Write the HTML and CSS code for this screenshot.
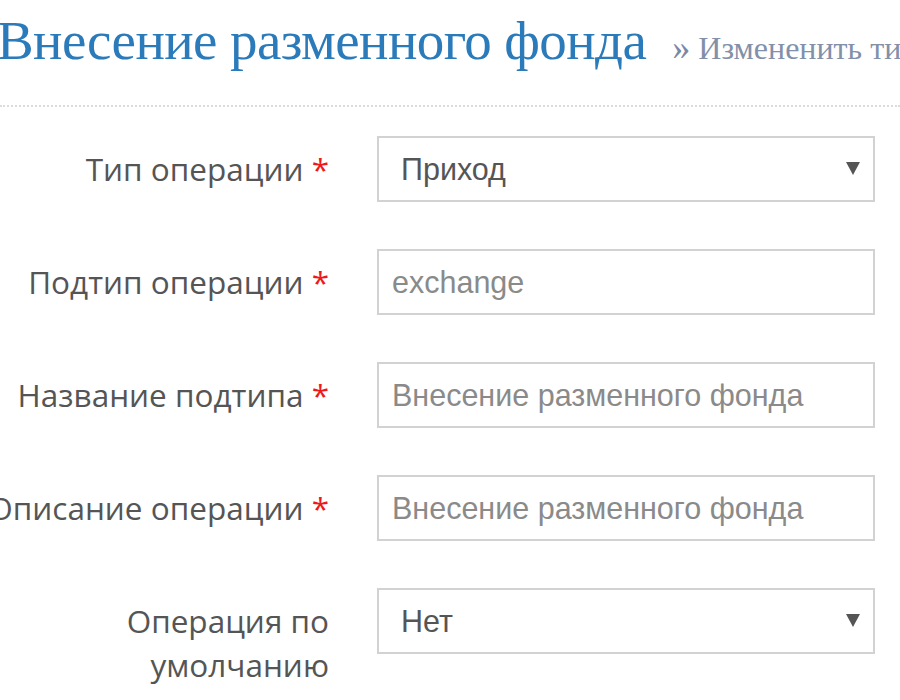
FILE: index.html
```html
<!DOCTYPE html>
<html lang="ru">
<head>
<meta charset="utf-8">
<link rel="stylesheet" href="styles.css">
</head>
<body>
<div class="page">
  <div class="header">
    <h1 class="title">Внесение разменного фонда</h1>
    <a class="change-link" href="#"><span class="raquo">»</span> Измененить тип операции</a>
  </div>
  <div class="divider"></div>
  <form class="form">
    <label class="label">Тип операции <span class="req">*</span></label>
    <div class="select"><span class="select-value">Приход</span><span class="arrow"></span></div>

    <label class="label">Подтип операции <span class="req">*</span></label>
    <input class="input" type="text" placeholder="exchange">

    <label class="label">Название подтипа <span class="req">*</span></label>
    <input class="input" type="text" placeholder="Внесение разменного фонда">

    <label class="label">Описание операции <span class="req">*</span></label>
    <input class="input" type="text" placeholder="Внесение разменного фонда">

    <label class="label label-wrap">Операция по умолчанию</label>
    <div class="select"><span class="select-value">Нет</span><span class="arrow"></span></div>
  </form>
</div>
</body>
</html>
```

FILE: styles.css
```css
html, body {
  margin: 0;
  padding: 0;
  background: #fff;
  overflow: hidden;
}
.page {
  width: 900px;
  height: 700px;
  overflow: hidden;
}
.header {
  display: flex;
  align-items: baseline;
  white-space: nowrap;
  margin-left: -3px;
  height: 80px;
  padding-top: 4px;
}
.title {
  margin: 0;
  font-family: "Liberation Serif", "Times New Roman", serif;
  font-weight: normal;
  font-size: 55px;
  letter-spacing: -0.6px;
  color: #2b7bba;
  line-height: 74px;
}
.change-link {
  margin-left: 26px;
  font-family: "Liberation Serif", "Times New Roman", serif;
  font-size: 32px;
  color: #8290aa;
  text-decoration: none;
}
.raquo {
  font-size: 36px;
  color: #7a88a6;
}
.divider {
  margin-top: 21px;
  border-top: 2px dotted #dcdcdc;
  height: 0;
}
.form {
  display: grid;
  grid-template-columns: 350px 498px;
  column-gap: 48px;
  row-gap: 47px;
  margin-left: -21px;
  margin-top: 29px;
}
.label {
  font-family: "Open Sans", sans-serif;
  font-size: 31.5px;
  color: #555;
  text-align: right;
  line-height: 44px;
  white-space: nowrap;
  align-self: start;
  padding-top: 11px;
}
.label-wrap {
  white-space: normal;
}
.req {
  color: #f01818;
}
.select, .input {
  box-sizing: border-box;
  height: 66px;
  width: 498px;
  border: 2px solid #d2d2d2;
  background: #fff;
  font-family: "Liberation Sans", Arial, sans-serif;
  font-size: 30.5px;
  margin: 0;
}
.select {
  display: flex;
  align-items: center;
  justify-content: space-between;
  padding: 0 13px 0 22px;
  color: #555;
}
.arrow {
  width: 0;
  height: 0;
  border-left: 7px solid transparent;
  border-right: 7px solid transparent;
  border-top: 13px solid #555;
  margin-top: -2px;
}
.input {
  padding: 0 13px;
  color: #555;
  outline: none;
}
.input::placeholder {
  color: #8a8a8a;
  opacity: 1;
}
```
